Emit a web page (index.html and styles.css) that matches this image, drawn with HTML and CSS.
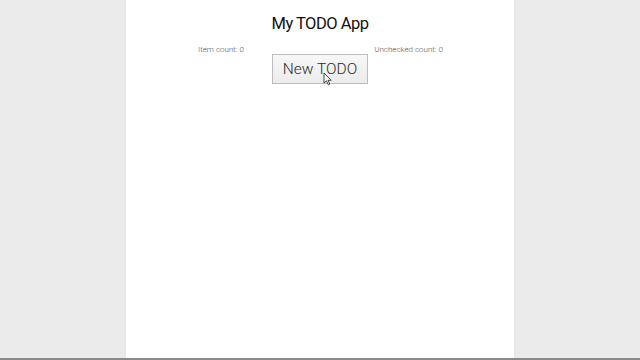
FILE: index.html
```html
<!DOCTYPE html>
<html>
<head>
<meta charset="utf-8">
<title>My TODO App</title>
<link rel="stylesheet" href="styles.css">
</head>
<body>
<div class="page">
  <main class="app">
    <h1 class="title">My TODO App</h1>
    <div class="counts">
      <span class="count">Item count: 0</span>
      <span class="count">Unchecked count: 0</span>
    </div>
    <div class="actions">
      <button class="new-btn">New TODO</button>
      <svg class="cursor" width="10" height="14" viewBox="0 0 10 14"><path d="M1 1 L1 11 L3.5 8.8 L5.3 12.8 L6.8 12.1 L5 8.3 L8.2 8.3 Z" fill="#fff" stroke="#333" stroke-width="0.9" stroke-linejoin="round"/></svg>
    </div>
  </main>
  <div class="bottom-bar"></div>
</div>
</body>
</html>
```

FILE: styles.css
```css
html, body {
  margin: 0;
  padding: 0;
  height: 100%;
}
body {
  background: #ebebeb;
  font-family: Roboto, "Liberation Sans", sans-serif;
  color: #111;
}
.page {
  height: 100%;
  display: flex;
  flex-direction: column;
}
.app {
  flex: 1;
  width: 388px;
  margin: 0 auto;
  background: #fff;
  box-shadow: 0 0 3px rgba(0,0,0,0.04);
}
.title {
  margin: 0;
  padding-top: 14px;
  font-size: 16.5px;
  font-weight: 400;
  letter-spacing: -0.5px;
  line-height: 20px;
  text-align: center;
}
.counts {
  display: flex;
  justify-content: space-between;
  padding: 0 71px 0 72px;
  margin-top: 11px;
  font-size: 8px;
  font-weight: 300;
  line-height: 9px;
  color: #555;
}
.actions {
  display: flex;
  justify-content: center;
  position: relative;
}
.new-btn {
  width: 96px;
  height: 30px;
  padding: 0;
  border: 1px solid #bdbdbd;
  background: linear-gradient(#f7f7f7, #ececec);
  font-family: Roboto, "Liberation Sans", sans-serif;
  font-weight: 300;
  font-size: 15.5px;
  color: #2a2a2a;
}
.cursor {
  position: absolute;
  left: 197px;
  top: 18px;
}
.bottom-bar {
  height: 2px;
  background: #8a8a8a;
}
```
